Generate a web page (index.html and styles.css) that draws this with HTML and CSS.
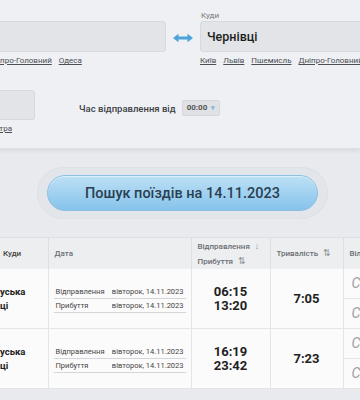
FILE: index.html
```html
<!doctype html>
<html>
<head>
    <meta charset="utf-8" />
    <title>Пошук поїздів</title>
    <link rel="stylesheet" href="styles.css">
</head>

<body>
    <div id="search">
        <div class="route">
            <div class="field from">
                <label class="caption">Звідки</label>
                <div class="input"></div>
                <div class="quick">
                    <a>Київ</a><a>Львів</a><a>Пшемисль</a><a>Дніпро-Головний</a><a>Одеса</a>
                </div>
            </div>
            <div class="swap">
                <svg width="22" height="10" viewBox="0 0 22 10">
                    <path d="M1 5 L6.5 0.8 V3.6 H15.5 V0.8 L21 5 L15.5 9.2 V6.4 H6.5 V9.2 Z" fill="#4ea4da" />
                </svg>
            </div>
            <div class="field to">
                <label class="caption">Куди</label>
                <div class="input">Чернівці</div>
                <div class="quick">
                    <a>Київ</a><a>Львів</a><a>Пшемисль</a><a>Дніпро-Головний</a><a>Одеса</a>
                </div>
            </div>
        </div>
        <div class="options">
            <div class="field date">
                <div class="input"></div>
                <div class="quick right"><a>Післязавтра</a></div>
            </div>
            <div class="depart">
                <span class="depart-label">Час відправлення від</span>
                <span class="select">00:00 <i>&#9662;</i></span>
            </div>
        </div>
    </div>

    <div class="submit">
        <div class="halo">
            <button>Пошук поїздів на 14.11.2023</button>
        </div>
    </div>

    <table id="trains">
        <colgroup>
            <col class="c-to">
            <col class="c-date">
            <col class="c-time">
            <col class="c-dur">
            <col class="c-seats">
        </colgroup>
        <thead>
            <tr>
                <th class="to">Куди</th>
                <th class="date">Дата</th>
                <th>Відправлення <span class="sort">&#8595;</span><br>Прибуття <span class="sort">&#8645;</span></th>
                <th>Тривалість <span class="sort">&#8645;</span></th>
                <th>Вільні місця</th>
            </tr>
        </thead>
        <tbody>
            <tr class="r1">
                <td class="to">уська<br>ці</td>
                <td>
                    <div class="dates">
                        <div><span>Відправлення</span><span>вівторок, 14.11.2023</span></div>
                        <div><span>Прибуття</span><span>вівторок, 14.11.2023</span></div>
                    </div>
                </td>
                <td class="times">06:15<br>13:20</td>
                <td class="dur">7:05</td>
                <td class="seats"><div>С1</div><div>С2</div></td>
            </tr>
            <tr class="r2">
                <td class="to">уська<br>ці</td>
                <td>
                    <div class="dates">
                        <div><span>Відправлення</span><span>вівторок, 14.11.2023</span></div>
                        <div><span>Прибуття</span><span>вівторок, 14.11.2023</span></div>
                    </div>
                </td>
                <td class="times">16:19<br>23:42</td>
                <td class="dur">7:23</td>
                <td class="seats"><div>С1</div><div>С2</div></td>
            </tr>
        </tbody>
    </table>
</body>

</html>
```

FILE: styles.css
```css
:root {
    --bg: #e8eaed;
    --panel: #eef0f3;
    --line: #dcdfe3;
    --text: #222;
}
html, body {
    background-color: var(--bg);
}
body {
    margin: 0;
    overflow: hidden;
    font-family: Roboto, 'Noto Sans', sans-serif;
    color: var(--text);
}

#search {
    margin-left: -111px;
    height: 137px;
    padding-top: 11px;
    background-color: var(--panel);
    border-bottom: 1px solid #dde0e4;
    box-shadow: 0 2px 4px rgba(0, 0, 0, 0.07);
}
.route {
    display: flex;
    align-items: flex-start;
}
    .field {
        width: 269px;
        flex-shrink: 0;
    }
    .field.from {
        width: 277px;
    }
    .caption {
        display: block;
        height: 10px;
        font-size: 8px;
        line-height: 10px;
        color: #777;
        padding-left: 1px;
    }
    .input {
        box-sizing: border-box;
        height: 31px;
        padding: 0 6px;
        background-color: #e2e4e7;
        border: 1px solid #d7dadd;
        border-radius: 3px;
        font-size: 12.5px;
        font-weight: 500;
        line-height: 29px;
        color: #1e1e1e;
    }
    .quick {
        display: flex;
        gap: 7px;
        margin-top: 4px;
        font-size: 8px;
        line-height: 10px;
    }
        .quick a {
            color: #4a4f55;
            text-decoration: underline;
            white-space: nowrap;
        }
    .quick.right {
        justify-content: flex-end;
        padding-right: 23px;
    }
    .swap {
        width: 34px;
        flex-shrink: 0;
        display: flex;
        justify-content: center;
        padding-top: 22px;
    }

.options {
    display: flex;
    align-items: flex-start;
    margin-top: 24px;
}
    .field.date {
        width: 146px;
    }
        .field.date .input {
            height: 30px;
        }
    .depart {
        display: flex;
        align-items: center;
        height: 16px;
        margin-top: 10px;
        margin-left: 44px;
        gap: 6px;
    }
        .depart-label {
            font-size: 9.5px;
            font-weight: 500;
            color: #3e4246;
        }
        .select {
            display: inline-block;
            height: 16px;
            padding: 0 4px;
            background-color: #dfe1e4;
            border: 1px solid #d6d9dc;
            border-radius: 2px;
            box-sizing: border-box;
            font-size: 8px;
            font-weight: 700;
            line-height: 14px;
            color: #555;
        }
            .select i {
                font-style: normal;
                color: #7fb6dc;
                font-size: 7px;
                margin-left: 2px;
            }

.submit {
    display: flex;
    justify-content: center;
    padding: 18px 0 18px 5px;
}
    .halo {
        padding: 7px 9px;
        background-color: #e2e6eb;
        border: 1px solid #dce1e7;
        border-radius: 26px;
    }
        .halo button {
            display: block;
            width: 271px;
            height: 36px;
            border: 1px solid #8dbfe2;
            border-radius: 18px;
            background: linear-gradient(#bde0f6, #86c3ea);
            box-shadow: inset 0 1px 0 rgba(255, 255, 255, 0.5);
            font-family: Roboto, sans-serif;
            font-size: 14.5px;
            font-weight: 500;
            color: #2a3f52;
        }

#trains {
    table-layout: fixed;
    width: 420px;
    border-collapse: collapse;
}
    .c-to { width: 48px; }
    .c-date { width: 143px; }
    .c-time { width: 79px; }
    .c-dur { width: 73px; }
    #trains th {
        height: 31px;
        padding: 0 6px;
        background-color: #eceef0;
        border-top: 1px solid var(--line);
        border-left: 1px solid var(--line);
        font-size: 8px;
        font-weight: 500;
        line-height: 14px;
        color: #6a6e73;
        text-align: left;
        white-space: nowrap;
    }
    #trains th.to {
        padding-left: 3px;
        border-left: none;
        color: #444;
    }
        .sort {
            color: #8a8e93;
            font-size: 9px;
            margin-left: 3px;
        }
    #trains td {
        padding: 0;
        background-color: #fbfbfb;
        border-left: 1px solid #e3e5e8;
        border-bottom: 1px solid #e3e5e8;
        vertical-align: middle;
    }
    .r1 td { height: 58px; }
    .r2 td { height: 59px; }
    #trains td.to {
        border-left: none;
        font-size: 9.5px;
        font-weight: 700;
        line-height: 14px;
        white-space: nowrap;
    }
    .dates {
        margin: 0 5px 0 5px;
        font-size: 7.5px;
        line-height: 12px;
        color: #444;
    }
        .dates div {
            display: flex;
            justify-content: space-between;
            padding: 1px 2px 0 2px;
            border-bottom: 1px solid #d3d6da;
        }
    #trains td.times, #trains td.dur {
        text-align: center;
        font-size: 13px;
        font-weight: 700;
        line-height: 14px;
    }
    #trains td.seats div {
        height: 29px;
        padding-left: 8px;
        font-size: 14px;
        font-style: italic;
        line-height: 29px;
        color: #9a9da1;
    }
        #trains td.seats div + div {
            border-top: 1px solid #e3e5e8;
        }
```
